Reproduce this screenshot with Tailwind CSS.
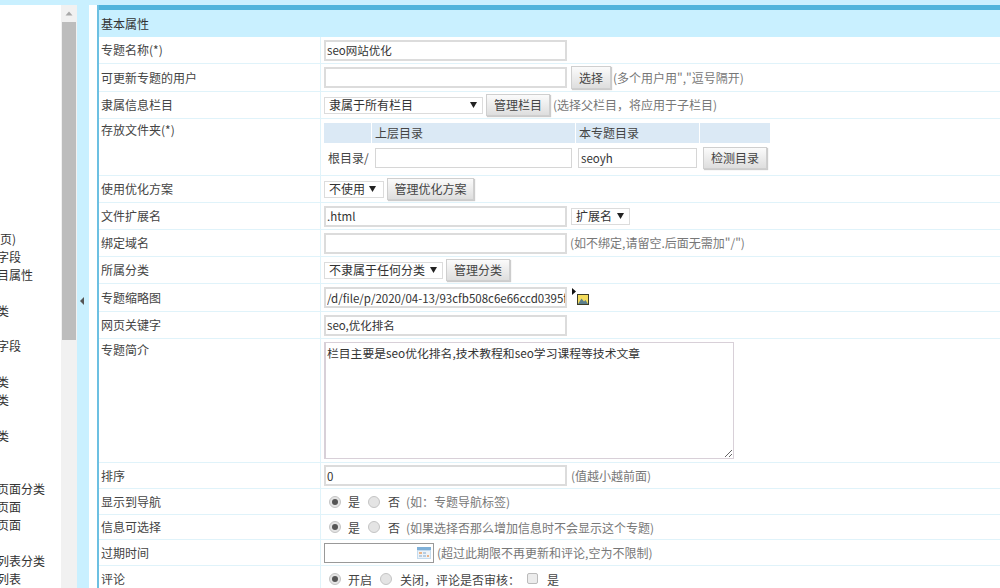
<!DOCTYPE html>
<html lang="zh">
<head>
<meta charset="utf-8">
<title>基本属性</title>
<script src="https://cdn.jsdelivr.net/npm/@tailwindcss/browser@4"></script>
</head>
<body class="m-0 bg-white">
<div class="w-[1000px] h-[588px] overflow-hidden flex flex-col bg-white text-[12px] leading-[16px] text-[#444] font-['Noto_Sans_CJK_SC','Liberation_Sans',sans-serif]">
  <div class="h-[5px] shrink-0 bg-[#c9f0ff]"></div>
  <div class="flex flex-1 min-h-0">
    <!-- sidebar -->
    <div class="w-[61px] shrink-0 pt-[225px] overflow-hidden whitespace-nowrap leading-[17.9px] text-[#333]">
      <div class="h-[17.9px]">页)</div>
      <div class="h-[17.9px] -ml-[3px]">字段</div>
      <div class="h-[17.9px] -ml-[3px]">目属性</div>
      <div class="h-[17.9px]"></div>
      <div class="h-[17.9px] -ml-[3px]">类</div>
      <div class="h-[17.9px]"></div>
      <div class="h-[17.9px] -ml-[3px]">字段</div>
      <div class="h-[17.9px]"></div>
      <div class="h-[17.9px] -ml-[3px]">类</div>
      <div class="h-[17.9px] -ml-[3px]">类</div>
      <div class="h-[17.9px]"></div>
      <div class="h-[17.9px] -ml-[3px]">类</div>
      <div class="h-[17.9px]"></div>
      <div class="h-[17.9px]"></div>
      <div class="h-[17.9px] -ml-[3px]">页面分类</div>
      <div class="h-[17.9px] -ml-[3px]">页面</div>
      <div class="h-[17.9px] -ml-[3px]">页面</div>
      <div class="h-[17.9px]"></div>
      <div class="h-[17.9px] -ml-[3px]">列表分类</div>
      <div class="h-[17.9px] -ml-[3px]">列表</div>
    </div>
    <!-- scrollbar -->
    <div class="w-[16px] shrink-0 bg-[#f1f1f1] flex flex-col">
      <div class="h-[17px] flex items-center justify-center">
        <svg width="8" height="5" viewBox="0 0 8 5"><path d="M4 0.5 L7.5 4.5 H0.5 Z" fill="#a8a8a8"/></svg>
      </div>
      <div class="h-[318px] mx-px bg-[#bdbdbd]"></div>
    </div>
    <!-- splitter -->
    <div class="w-[12px] shrink-0 bg-[#c9f0ff] flex items-center justify-center">
      <svg class="mt-[9px] -ml-[2px]" width="4" height="8" viewBox="0 0 4 8"><path d="M4 0 V8 L0 4 Z" fill="#555"/></svg>
    </div>
    <div class="w-[8px] shrink-0 bg-white"></div>
    <!-- main -->
    <div class="flex-1 min-w-0 border-l-2 border-[#6cc0e2]">
      <div class="h-[5px] bg-[#4fb4dc]"></div>
      <div class="h-[27px] bg-[#c9f0ff] flex items-center pl-[2px] text-[#333]">基本属性</div>

      <div class="flex h-[27px] border-b border-[#e0f3fa]">
        <div class="w-[222px] shrink-0 border-r border-[#e0f3fa] pl-[2px] flex items-center">专题名称(*)</div>
        <div class="flex-1 pl-[3px] flex items-center gap-[4px]">
          <input value="seo网站优化" class="w-[243px] h-[21px] px-[1px] text-[11.5px] border-2 border-[#dcdcdc] bg-white text-[#333] outline-none">
        </div>
      </div>

      <div class="flex h-[28px] border-b border-[#e0f3fa]">
        <div class="w-[222px] shrink-0 border-r border-[#e0f3fa] pl-[2px] flex items-center">可更新专题的用户</div>
        <div class="flex-1 pl-[3px] flex items-center gap-[3px]">
          <input class="w-[243px] h-[21px] px-[1px] border-2 border-[#dcdcdc] bg-white outline-none">
          <button class="w-[40px] h-[23px] ml-[1px] border border-[#cfcfcf] bg-gradient-to-b from-[#fbfbfb] to-[#dedede] shadow-[1px_1px_1px_#ccc] text-[#444]">选择</button>
          <span class="-ml-[1px] text-[#777]">(多个用户用","逗号隔开)</span>
        </div>
      </div>

      <div class="flex h-[27px] border-b border-[#e0f3fa]">
        <div class="w-[222px] shrink-0 border-r border-[#e0f3fa] pl-[2px] flex items-center">隶属信息栏目</div>
        <div class="flex-1 pl-[3px] flex items-center gap-[3px]">
          <div class="w-[159px] h-[17px] border border-[#dcdcdc] bg-white flex items-center justify-between pl-[4px] pr-[5px] text-[#333]"><span>隶属于所有栏目</span><svg width="7" height="6" viewBox="0 0 7 6"><path d="M0 0 H7 L3.5 6 Z" fill="#222"/></svg></div>
          <button class="w-[64px] h-[22px] border border-[#cfcfcf] bg-gradient-to-b from-[#fbfbfb] to-[#dedede] shadow-[1px_1px_1px_#ccc] text-[#444]">管理栏目</button>
          <span class="text-[#777]">(选择父栏目，将应用于子栏目)</span>
        </div>
      </div>

      <div class="flex h-[57px] border-b border-[#e0f3fa]">
        <div class="w-[222px] shrink-0 border-r border-[#e0f3fa] pl-[2px] pt-[3px]">存放文件夹(*)</div>
        <div class="flex-1 pl-[3px] pt-[4px]">
          <div class="flex h-[20px] w-[446px] gap-[1px] bg-white">
            <div class="w-[47px] bg-[#dbe9f5]"></div>
            <div class="w-[203px] bg-[#dbe9f5] pl-[3px] leading-[20px]">上层目录</div>
            <div class="w-[123px] bg-[#dbe9f5] pl-[3px] leading-[20px]">本专题目录</div>
            <div class="flex-1 bg-[#dbe9f5]"></div>
          </div>
          <div class="flex items-center h-[26px] mt-[2px] w-[446px]">
            <span class="w-[51px] pl-[4px] shrink-0">根目录/</span>
            <input class="w-[197px] h-[20px] px-[2px] border border-[#d6d6d6] bg-white outline-none">
            <input value="seoyh" class="w-[119px] h-[20px] ml-[6px] px-[2px] text-[11.5px] border border-[#d6d6d6] bg-white text-[#333] outline-none">
            <button class="w-[64px] h-[22px] ml-[6px] border border-[#cfcfcf] bg-gradient-to-b from-[#fbfbfb] to-[#dedede] shadow-[1px_1px_1px_#ccc] text-[#444]">检测目录</button>
          </div>
        </div>
      </div>

      <div class="flex h-[27px] border-b border-[#e0f3fa]">
        <div class="w-[222px] shrink-0 border-r border-[#e0f3fa] pl-[2px] flex items-center">使用优化方案</div>
        <div class="flex-1 pl-[3px] flex items-center gap-[3px]">
          <div class="w-[60px] h-[17px] border border-[#dcdcdc] bg-white flex items-center justify-between pl-[4px] pr-[7px] text-[#333]"><span>不使用</span><svg width="7" height="6" viewBox="0 0 7 6"><path d="M0 0 H7 L3.5 6 Z" fill="#222"/></svg></div>
          <button class="w-[87px] h-[22px] border border-[#cfcfcf] bg-gradient-to-b from-[#fbfbfb] to-[#dedede] shadow-[1px_1px_1px_#ccc] text-[#444]">管理优化方案</button>
        </div>
      </div>

      <div class="flex h-[27px] border-b border-[#e0f3fa]">
        <div class="w-[222px] shrink-0 border-r border-[#e0f3fa] pl-[2px] flex items-center">文件扩展名</div>
        <div class="flex-1 pl-[3px] flex items-center gap-[4px]">
          <input value=".html" class="w-[243px] h-[21px] px-[1px] text-[11.5px] border-2 border-[#dcdcdc] bg-white text-[#333] outline-none">
          <div class="w-[59px] h-[17px] border border-[#dcdcdc] bg-white flex items-center justify-between pl-[4px] pr-[5px] text-[#333]"><span>扩展名</span><svg width="7" height="6" viewBox="0 0 7 6"><path d="M0 0 H7 L3.5 6 Z" fill="#222"/></svg></div>
        </div>
      </div>

      <div class="flex h-[27px] border-b border-[#e0f3fa]">
        <div class="w-[222px] shrink-0 border-r border-[#e0f3fa] pl-[2px] flex items-center">绑定域名</div>
        <div class="flex-1 pl-[3px] flex items-center gap-[4px]">
          <input class="w-[243px] h-[21px] px-[1px] border-2 border-[#dcdcdc] bg-white outline-none">
          <span class="-ml-[1px] text-[#777]">(如不绑定,请留空.后面无需加"/")</span>
        </div>
      </div>

      <div class="flex h-[27px] border-b border-[#e0f3fa]">
        <div class="w-[222px] shrink-0 border-r border-[#e0f3fa] pl-[2px] flex items-center">所属分类</div>
        <div class="flex-1 pl-[3px] flex items-center gap-[3px]">
          <div class="w-[119px] h-[17px] border border-[#dcdcdc] bg-white flex items-center justify-between pl-[4px] pr-[5px] text-[#333]"><span>不隶属于任何分类</span><svg width="7" height="6" viewBox="0 0 7 6"><path d="M0 0 H7 L3.5 6 Z" fill="#222"/></svg></div>
          <button class="w-[64px] h-[22px] border border-[#cfcfcf] bg-gradient-to-b from-[#fbfbfb] to-[#dedede] shadow-[1px_1px_1px_#ccc] text-[#444]">管理分类</button>
        </div>
      </div>

      <div class="flex h-[28px] border-b border-[#e0f3fa]">
        <div class="w-[222px] shrink-0 border-r border-[#e0f3fa] pl-[2px] flex items-center">专题缩略图</div>
        <div class="flex-1 pl-[3px] flex items-center gap-[5px]">
          <input value="/d/file/p/2020/04-13/93cfb508c6e66ccd0395f" class="w-[243px] h-[21px] pl-[1px] pr-0 text-[11.5px] border-2 border-[#dcdcdc] bg-white text-[#333] outline-none">
          <svg width="17" height="17" viewBox="0 0 17 17" class="-mt-[2px]">
            <path d="M0 0 L4 3.5 L0 7 Z" fill="#111"/>
            <rect x="5.5" y="6.5" width="11" height="10" fill="#f4dc5c" stroke="#3c3c28"/>
            <path d="M6 16 L9.5 10.5 L12 13.5 L13.5 12 L16 16 Z" fill="#5c7f8c"/>
          </svg>
        </div>
      </div>

      <div class="flex h-[27px] border-b border-[#e0f3fa]">
        <div class="w-[222px] shrink-0 border-r border-[#e0f3fa] pl-[2px] flex items-center">网页关键字</div>
        <div class="flex-1 pl-[3px] flex items-center">
          <input value="seo,优化排名" class="w-[243px] h-[21px] px-[1px] text-[11.5px] border-2 border-[#dcdcdc] bg-white text-[#333] outline-none">
        </div>
      </div>

      <div class="flex h-[124px] border-b border-[#e0f3fa]">
        <div class="w-[222px] shrink-0 border-r border-[#e0f3fa] pl-[2px] pt-[3px]">专题简介</div>
        <div class="flex-1 pl-[3px] pt-[3px]">
          <textarea class="block w-[410px] h-[117px] px-[1px] py-[2px] text-[11.8px] border border-[#d8d0d8] border-l-2 bg-white text-[#333] outline-none">栏目主要是seo优化排名,技术教程和seo学习课程等技术文章</textarea>
        </div>
      </div>

      <div class="flex h-[26px] border-b border-[#e0f3fa]">
        <div class="w-[222px] shrink-0 border-r border-[#e0f3fa] pl-[2px] flex items-center">排序</div>
        <div class="flex-1 pl-[3px] flex items-center gap-[4px]">
          <input value="0" class="w-[243px] h-[21px] px-[1px] text-[11.5px] border-2 border-[#dcdcdc] bg-white text-[#333] outline-none">
          <span class="text-[#777]">(值越小越前面)</span>
        </div>
      </div>

      <div class="flex h-[26px] border-b border-[#e0f3fa]">
        <div class="w-[222px] shrink-0 border-r border-[#e0f3fa] pl-[2px] flex items-center">显示到导航</div>
        <div class="flex-1 pl-[8px] flex items-center">
          <span class="w-[12px] h-[12px] rounded-full border border-[#c4c4c4] bg-[#e4e4e4] flex items-center justify-center"><span class="w-[6px] h-[6px] rounded-full bg-[#555]"></span></span>
          <span class="ml-[7px] pt-[1px]">是</span>
          <span class="ml-[8px] w-[12px] h-[12px] rounded-full border border-[#c4c4c4] bg-[#e4e4e4]"></span>
          <span class="ml-[8px] pt-[1px]">否</span>
          <span class="ml-[6px] pt-[1px] text-[#777]">(如：专题导航标签)</span>
        </div>
      </div>

      <div class="flex h-[25px] border-b border-[#e0f3fa]">
        <div class="w-[222px] shrink-0 border-r border-[#e0f3fa] pl-[2px] flex items-center">信息可选择</div>
        <div class="flex-1 pl-[8px] flex items-center">
          <span class="w-[12px] h-[12px] rounded-full border border-[#c4c4c4] bg-[#e4e4e4] flex items-center justify-center"><span class="w-[6px] h-[6px] rounded-full bg-[#555]"></span></span>
          <span class="ml-[7px] pt-[1px]">是</span>
          <span class="ml-[8px] w-[12px] h-[12px] rounded-full border border-[#c4c4c4] bg-[#e4e4e4]"></span>
          <span class="ml-[8px] pt-[1px]">否</span>
          <span class="ml-[6px] pt-[1px] text-[#777]">(如果选择否那么增加信息时不会显示这个专题)</span>
        </div>
      </div>

      <div class="flex h-[26px] border-b border-[#e0f3fa]">
        <div class="w-[222px] shrink-0 border-r border-[#e0f3fa] pl-[2px] flex items-center">过期时间</div>
        <div class="flex-1 pl-[3px] flex items-center gap-[3px]">
          <div class="relative w-[110px] h-[20px] border border-[#999] bg-white">
            <svg class="absolute right-[2px] top-[3px]" width="14" height="12" viewBox="0 0 14 12">
              <rect width="14" height="12" fill="#c5dcef"/>
              <rect y="0" width="14" height="3" fill="#7fb0d8"/>
              <rect x="1" y="4" width="12" height="7" fill="#eef3f8"/>
              <rect x="2" y="5" width="3" height="2" fill="#e8b48a"/>
              <rect x="6" y="5" width="3" height="2" fill="#b8cde0"/>
              <rect x="10" y="8" width="2" height="2" fill="#e8b48a"/>
              <rect x="2" y="8" width="3" height="2" fill="#b8cde0"/>
              <rect x="6" y="8" width="3" height="2" fill="#b8cde0"/>
            </svg>
          </div>
          <span class="text-[#777]">(超过此期限不再更新和评论,空为不限制)</span>
        </div>
      </div>

      <div class="flex h-[26px]">
        <div class="w-[222px] shrink-0 border-r border-[#e0f3fa] pl-[2px] flex items-center">评论</div>
        <div class="flex-1 pl-[8px] flex items-center">
          <span class="w-[12px] h-[12px] rounded-full border border-[#c4c4c4] bg-[#e4e4e4] flex items-center justify-center"><span class="w-[6px] h-[6px] rounded-full bg-[#555]"></span></span>
          <span class="ml-[7px] pt-[1px]">开启</span>
          <span class="ml-[8px] w-[12px] h-[12px] rounded-full border border-[#c4c4c4] bg-[#e4e4e4]"></span>
          <span class="ml-[8px] pt-[1px]">关闭，评论是否审核：</span>
          <span class="ml-[7px] -mt-[2px] w-[11px] h-[11px] rounded-[2px] border border-[#bbb] bg-[#ececec]"></span>
          <span class="ml-[9px] pt-[1px]">是</span>
        </div>
      </div>
    </div>
  </div>
</div>
</body>
</html>
